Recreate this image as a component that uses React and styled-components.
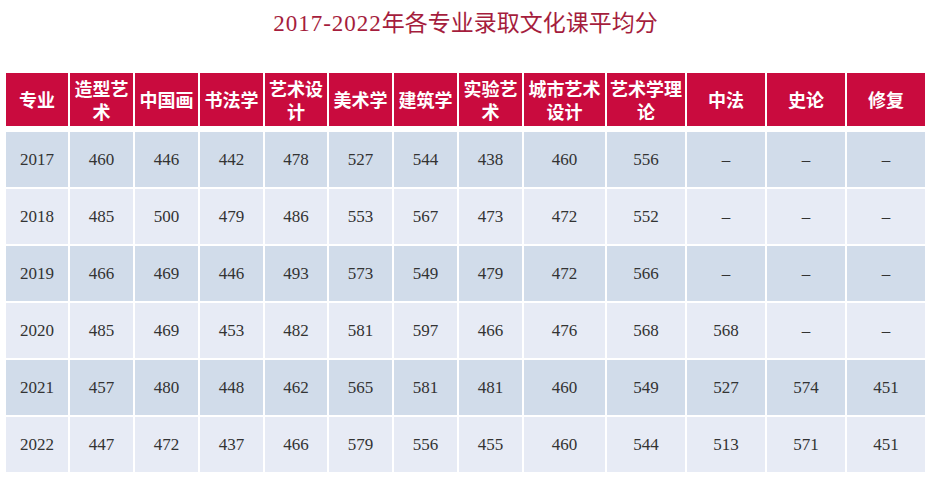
import React from "react";
import styled, { createGlobalStyle } from "styled-components";

const GlobalStyle = createGlobalStyle`
  html, body { margin: 0; padding: 0; background: #ffffff; }
  body { width: 932px; height: 481px; overflow: hidden; }
`;

const COLUMNS = "62px 63px 63px 63px 62px 63px 63px 63px 81px 78px 78px 78px 78px";

const Page = styled.div`
  display: flex;
  flex-direction: column;
  align-items: stretch;
  padding: 0 7px 0 6px;
`;

const Title = styled.h1`
  margin: 12px 0 37px;
  height: 24px;
  line-height: 24px;
  text-align: center;
  font-family: "Liberation Serif", "Noto Sans CJK SC", serif;
  font-weight: 400;
  font-size: 23px;
  color: #a51d3d;
`;

const Years = styled.span`
  letter-spacing: 1px;
`;

const Grid = styled.div`
  display: grid;
  grid-template-columns: ${COLUMNS};
  column-gap: 2px;
  row-gap: 2px;
`;

const HeaderGrid = styled(Grid)`
  grid-auto-rows: 53px;
  margin-bottom: 6px;
`;

const BodyGrid = styled(Grid)`
  grid-auto-rows: 55px;
`;

const HeadCell = styled.div`
  display: flex;
  align-items: center;
  justify-content: center;
  text-align: center;
  background: #c90b3e;
  color: #ffffff;
  font-family: "Noto Sans CJK SC", sans-serif;
  font-weight: 700;
  font-size: 18px;
  line-height: 23px;
  padding: 0 2px;
  box-sizing: border-box;
  word-break: break-all;
`;

const Cell = styled.div`
  display: flex;
  align-items: center;
  justify-content: center;
  background: ${(p) => (p.$dark ? "#d1dcea" : "#e7ebf5")};
  color: #333333;
  font-family: "Liberation Serif", "Noto Sans CJK SC", serif;
  font-size: 17px;
`;

const headers = [
  "专业",
  "造型艺术",
  "中国画",
  "书法学",
  "艺术设计",
  "美术学",
  "建筑学",
  "实验艺术",
  "城市艺术设计",
  "艺术学理论",
  "中法",
  "史论",
  "修复",
];

const D = "–";
const rows = [
  ["2017", "460", "446", "442", "478", "527", "544", "438", "460", "556", D, D, D],
  ["2018", "485", "500", "479", "486", "553", "567", "473", "472", "552", D, D, D],
  ["2019", "466", "469", "446", "493", "573", "549", "479", "472", "566", D, D, D],
  ["2020", "485", "469", "453", "482", "581", "597", "466", "476", "568", "568", D, D],
  ["2021", "457", "480", "448", "462", "565", "581", "481", "460", "549", "527", "574", "451"],
  ["2022", "447", "472", "437", "466", "579", "556", "455", "460", "544", "513", "571", "451"],
];

export default function App() {
  return (
    <>
      <GlobalStyle />
      <Page>
        <Title>
          <Years>2017-2022</Years>年各专业录取文化课平均分
        </Title>
        <HeaderGrid>
          {headers.map((h) => (
            <HeadCell key={h}>{h}</HeadCell>
          ))}
        </HeaderGrid>
        <BodyGrid>
          {rows.map((row, ri) =>
            row.map((v, ci) => (
              <Cell key={`${ri}-${ci}`} $dark={ri % 2 === 0}>
                {v}
              </Cell>
            ))
          )}
        </BodyGrid>
      </Page>
    </>
  );
}
